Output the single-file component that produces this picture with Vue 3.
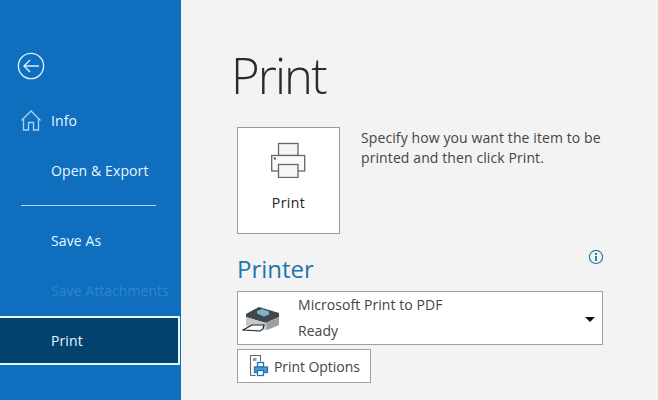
<script setup>
const navTop = [{ label: 'Open & Export' }]
const navBottom = [
  { label: 'Save As' },
  { label: 'Save Attachments', disabled: true },
]
</script>

<template>
  <div class="app">
    <aside class="side">
      <button class="back" aria-label="Back">
        <svg width="30" height="30" viewBox="0 0 30 30" fill="none" stroke="#d8f0ff" stroke-width="1.4">
          <circle cx="15" cy="15" r="12.6" />
          <path d="M23 15H8M14 9l-6 6 6 6" />
        </svg>
      </button>
      <div class="item">
        <svg class="home" width="20" height="21" viewBox="0 0 20 21" fill="none" stroke="#a9d4f5" stroke-width="1.3">
          <path d="M0.500 10.500 10 1l9.500 9.500" />
          <path d="M2.500 9v11h5v-7.500h5V20h5V9" />
        </svg>
        <span>Info</span>
      </div>
      <div v-for="n in navTop" :key="n.label" class="item">{{ n.label }}</div>
      <div class="rule"></div>
      <div v-for="n in navBottom" :key="n.label" class="item" :class="{ off: n.disabled }">{{ n.label }}</div>
      <div class="item active">Print</div>
    </aside>

    <main class="main">
      <h1 class="title">Print</h1>
      <div class="action">
        <button class="print-btn">
          <svg width="35" height="36" viewBox="0 0 35 36" fill="#fff" stroke="#666" stroke-width="1.300">
            <rect x="7.500" y="1.500" width="19.500" height="12" fill="#f6f6f6" />
            <rect x="0.700" y="13.500" width="33" height="15.500" fill="#fafafa" />
            <rect x="7.500" y="22.500" width="19.500" height="13" fill="#f6f6f6" />
            <rect x="2.800" y="15.500" width="2" height="2" fill="#444" stroke="none" />
          </svg>
          <span>Print</span>
        </button>
        <p class="desc">Specify how you want the item to be printed and then click Print.</p>
      </div>
      <div class="printer-head">
        <h2>Printer</h2>
        <svg class="info" width="16" height="16" viewBox="0 0 16 16" fill="none">
          <circle cx="8" cy="8" r="6.600" stroke="#2b7ea8" stroke-width="1.200" />
          <rect x="7" y="7" width="2" height="5" fill="#2b7ea8" />
          <rect x="7" y="4" width="2" height="2" fill="#2b7ea8" />
        </svg>
      </div>
      <div class="select">
        <svg class="printer-pic" width="40" height="28" viewBox="0 0 40 28">
          <path d="M4 9 17 2l20 6v4L24 18 4 12z" fill="#3f484e" />
          <path d="M15 6 20 4l7 2.500v3l-5 2-7-3z" fill="#7fb4c8" />
          <path d="M4 12l20 6 13-6v8L25 25 4 21z" fill="#c4c8ca" />
          <path d="M24 18l13-6v8L25 25z" fill="#9a9fa3" />
          <path d="M1 25l9-5h12l-1 4-3 2z" fill="#fafafa" stroke="#222" stroke-width="1.200" />
        </svg>
        <div class="sel-text">
          <div>Microsoft Print to PDF</div>
          <div>Ready</div>
        </div>
        <span class="caret"></span>
      </div>
      <button class="options">
        <svg width="20" height="24" viewBox="0 0 20 24" fill="none">
          <path d="M1.500 21.500V1.500h10v6" stroke="#666" stroke-width="1.100" />
          <path d="M1.500 21.500h5" stroke="#666" stroke-width="1.100" />
          <rect x="4" y="4" width="3.500" height="3" fill="#999" />
          <rect x="8.500" y="8.500" width="6" height="4.500" fill="#fff" stroke="#1f78b4" stroke-width="1.300" />
          <rect x="5.500" y="13" width="13" height="5.500" fill="#4a9bd0" stroke="#1f78b4" stroke-width="1.300" />
          <rect x="8.500" y="16.500" width="6" height="5" fill="#fff" stroke="#1f78b4" stroke-width="1.300" />
        </svg>
        <span>Print Options</span>
      </button>
    </main>
  </div>
</template>

<style>
html, body { margin: 0; overflow: hidden; }
</style>

<style scoped>
.app {
  display: flex;
  width: 658px;
  height: 400px;
  overflow: hidden;
  font-family: "Open Sans", "Noto Sans", sans-serif;
  background: #f3f3f3;
  color: #333;
}
.side {
  width: 181px;
  flex: none;
  background: #106ebe;
  padding-top: 51px;
  box-sizing: border-box;
}
.back {
  display: block;
  margin: 0 0 14px 16px;
  padding: 0;
  height: 30px;
  width: 30px;
  border: 0;
  background: none;
}
.item {
  position: relative;
  height: 50px;
  display: flex;
  align-items: center;
  padding-left: 51px;
  font-size: 14px;
  letter-spacing: 0.1px;
  color: #e8f6ff;
  box-sizing: border-box;
}
.home { position: absolute; left: 21px; top: 15px; }
.rule {
  height: 1px;
  width: 135px;
  margin: 10px 0 9px 21px;
  background: #a6dcf7;
}
.off { color: #2e86d0; letter-spacing: 0.06px; }
.active {
  height: 49px;
  margin-top: 1px;
  width: 180px;
  background: #03426f;
  border: 2px solid #e4f7fb;
  border-left: 0;
  padding-bottom: 1px;
}
.main {
  flex: 1;
  padding-left: 56px;
  min-width: 0;
}
.title {
  margin: 41px 0 0 -6px;
  font-size: 49px;
  line-height: 68px;
  font-weight: 300;
  color: #2b2b2b;
  letter-spacing: -1.900px;
}
.action {
  display: flex;
  margin-top: 18px;
}
.print-btn {
  width: 103px;
  height: 107px;
  flex: none;
  box-sizing: border-box;
  border: 1px solid #9a9a9a;
  background: #fff;
  padding: 14px 0 0;
  display: flex;
  flex-direction: column;
  align-items: center;
  font: inherit;
  font-size: 14px;
  font-weight: 500;
  color: #222;
}
.print-btn span { margin-top: 16px; line-height: 18px; letter-spacing: 0.4px; }
.desc {
  margin: 1px 0 0 21px;
  width: 262px;
  font-size: 14px;
  line-height: 20px;
  letter-spacing: 0.1px;
  color: #444;
}
.printer-head {
  position: relative;
  width: 366px;
  margin-top: 19px;
  height: 38px;
}
.printer-head h2 {
  margin: 0;
  font-size: 24px;
  line-height: 32px;
  font-weight: 400;
  color: #1f76ad;
}
.info { position: absolute; left: 351px; top: -4px; }
.select {
  position: relative;
  width: 366px;
  height: 54px;
  box-sizing: border-box;
  border: 1px solid #a0a0a0;
  background: #fff;
  display: flex;
  align-items: center;
  padding-left: 60px;
}
.printer-pic { position: absolute; left: 4px; top: 13px; }
.sel-text {
  font-size: 14px;
  line-height: 26px;
  letter-spacing: 0.06px;
  color: #444;
}
.caret {
  position: absolute;
  right: 7px;
  top: 25px;
  border: 5px solid transparent;
  border-top: 5px solid #111;
  border-bottom: 0;
}
.options {
  margin-top: 4px;
  width: 134px;
  height: 34px;
  box-sizing: border-box;
  border: 1px solid #a0a0a0;
  background: #fff;
  padding: 0 0 0 11px;
  display: flex;
  align-items: center;
  gap: 5px;
  font: inherit;
  font-size: 14px;
  letter-spacing: -0.06px;
  color: #444;
}
</style>
